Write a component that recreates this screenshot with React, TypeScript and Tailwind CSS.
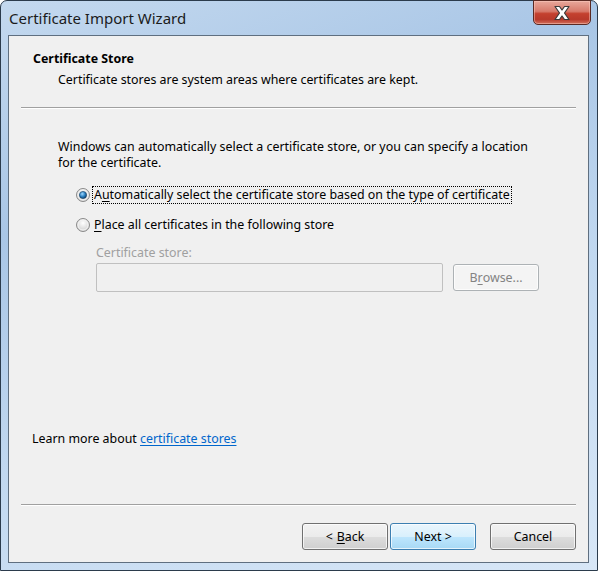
import React from "react";

const font = { fontFamily: '"Noto Sans", "Segoe UI", sans-serif' };

function Radio({ checked }: { checked?: boolean }) {
  return (
    <svg width="14" height="14" viewBox="0 0 14 14" className="shrink-0">
      <defs>
        <radialGradient id="rbg" cx="50%" cy="35%" r="70%">
          <stop offset="0%" stopColor="#ffffff" />
          <stop offset="100%" stopColor="#c8c8c8" />
        </radialGradient>
        <radialGradient id="rdot" cx="40%" cy="35%" r="70%">
          <stop offset="0%" stopColor="#9fd8ff" />
          <stop offset="55%" stopColor="#2a7fc0" />
          <stop offset="100%" stopColor="#0c3c6a" />
        </radialGradient>
      </defs>
      <circle cx="7" cy="7" r="6.5" fill="url(#rbg)" stroke="#8a8a8a" strokeWidth="1" />
      <circle cx="7" cy="7" r="5" fill="none" stroke="#f4f4f4" strokeWidth="1" />
      {checked && <circle cx="7" cy="7" r="3.6" fill="url(#rdot)" stroke="#0f3a60" strokeWidth="0.6" />}
    </svg>
  );
}

function WinButton({ children, primary, disabled, className = "" }: { children: React.ReactNode; primary?: boolean; disabled?: boolean; className?: string }) {
  const skin = disabled
    ? "border-[#adb2b5] bg-[#f4f4f4] text-[#838383]"
    : primary
    ? "border-[#3c7fb1] bg-[linear-gradient(#eaf6fd_0%,#d9f0fc_50%,#bee6fd_51%,#a7d9f5_100%)] text-black"
    : "border-[#707070] bg-[linear-gradient(#f2f2f2_0%,#ebebeb_50%,#dddddd_51%,#cfcfcf_100%)] text-black";
  return (
    <div className={`flex h-[27px] w-[86px] items-center justify-center rounded-[3px] border text-[12.4px] shadow-[inset_0_0_0_1px_rgba(255,255,255,0.7)] ${skin} ${className}`}>
      {children}
    </div>
  );
}

export default function App() {
  return (
    <div style={font} className="w-[598px] h-[571px] overflow-hidden bg-white">
      <div className="flex h-[571px] w-[598px] flex-col rounded-t-[7px] border border-[#2b3b4c] bg-[linear-gradient(160deg,#c4d9ef_0%,#a9c6e6_30%,#c1d8f0_60%,#d8e7f7_100%)] pl-[7px] pr-[8px] pb-[7px]">
        {/* Title bar */}
        <div className="relative flex h-[34px] shrink-0 items-start">
          <span className="mt-[7px] ml-[1px] text-[15px] leading-[20px] text-[#1b1b1b]">Certificate Import Wizard</span>
          <div className="absolute right-[-2px] top-[-1px] flex h-[25px] w-[58px] items-center justify-center rounded-b-[5px] border border-[#5a2a24] bg-[linear-gradient(#e8a89c_0%,#d77a6b_45%,#c4412f_55%,#b8392b_80%,#d2705c_100%)] shadow-[inset_0_0_0_1px_rgba(255,210,200,0.45)]">
            <svg width="20" height="16" viewBox="0 0 20 16">
              <path d="M3 1.5 L7.5 1.5 L10 5 L12.5 1.5 L17 1.5 L12.5 8 L17 14.5 L12.5 14.5 L10 11 L7.5 14.5 L3 14.5 L7.5 8 Z" fill="#ffffff" stroke="#3a3a3a" strokeWidth="1.2" strokeLinejoin="round" />
            </svg>
          </div>
        </div>

        {/* Client area */}
        <div className="flex h-[528px] w-[581px] flex-col border border-[#5f6f80] bg-[#f0f0f0] text-[12.4px] leading-[16px] text-black">
          <div className="ml-[24px] mt-[15px] font-bold">Certificate Store</div>
          <div className="ml-[49px] mt-[5px]">Certificate stores are system areas where certificates are kept.</div>
          <div className="ml-[12px] mt-[19px] h-[2px] w-[555px] border-t border-b border-t-[#a0a0a0] border-b-white" />

          <div className="ml-[49px] mt-[30px] w-[470px]">
            Windows can automatically select a certificate store, or you can specify a location for the certificate.
          </div>

          <div className="ml-[67px] mt-[15px] flex items-center gap-[2px]">
            <Radio checked />
            <span className="border border-dotted border-black px-[1px] leading-[16px]">
              A<span className="underline underline-offset-2">u</span>tomatically select the certificate store based on the type of certificate
            </span>
          </div>
          <div className="ml-[67px] mt-[13px] flex items-center gap-[3px]">
            <Radio />
            <span className="px-[1px]">
              <span className="underline underline-offset-2">P</span>lace all certificates in the following store
            </span>
          </div>

          <div className="ml-[87px] mt-[12px] text-[#a0a0a0]">Certificate store:</div>
          <div className="ml-[87px] mt-[2px] flex items-center gap-[10px]">
            <div className="h-[29px] w-[347px] rounded-[2px] border border-[#c0c0c0] bg-[#f0f0f0]" />
            <WinButton disabled>
              B<span className="underline underline-offset-2">r</span>owse...
            </WinButton>
          </div>

          <div className="ml-[23px] mt-[139px]">
            Learn more about <span className="text-[#0066cc] underline underline-offset-2">certificate stores</span>
          </div>

          <div className="ml-[12px] mt-[57px] h-[2px] w-[555px] border-t border-b border-t-[#a0a0a0] border-b-white" />

          <div className="ml-[293px] mt-[17px] flex">
            <WinButton>
              &lt; <span className="ml-[4px] underline underline-offset-2">B</span>ack
            </WinButton>
            <WinButton primary className="ml-[2px]">Next &gt;</WinButton>
            <WinButton className="ml-[14px]">Cancel</WinButton>
          </div>
        </div>
      </div>
    </div>
  );
}
